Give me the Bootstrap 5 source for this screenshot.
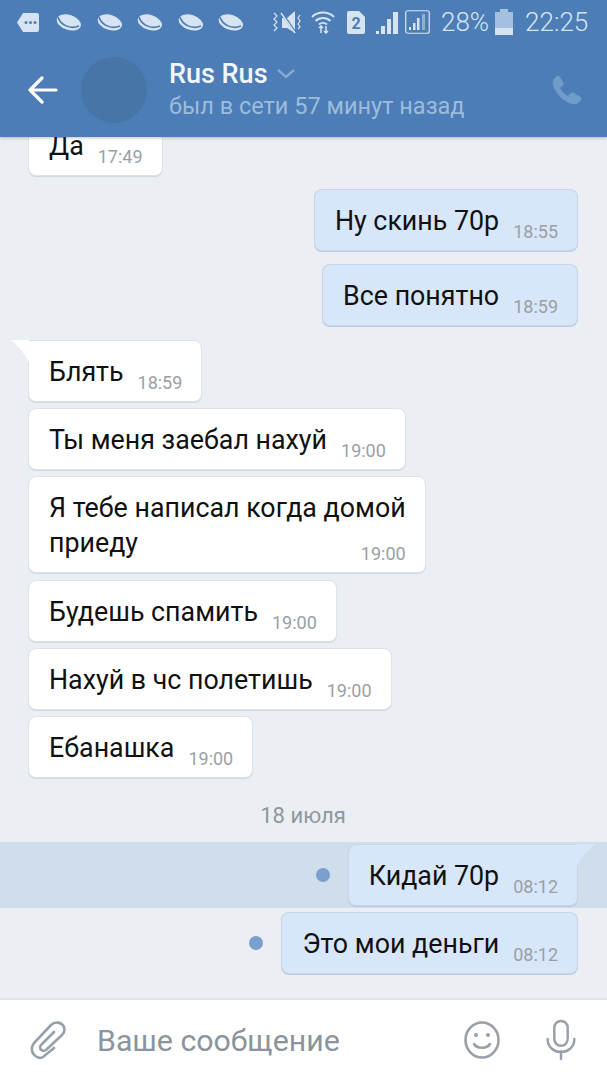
<!DOCTYPE html>
<html lang="ru">
<head>
<meta charset="utf-8">
<title>Rus Rus</title>
<link rel="stylesheet" href="https://cdn.jsdelivr.net/npm/bootstrap@5.3.0/dist/css/bootstrap.min.css">
<style>
html,body{height:1080px;overflow:hidden}
body{font-family:Roboto,"Liberation Sans",sans-serif;background:#ebeff3;color:#111}
.screen{width:607px;height:1080px}
.top{background:#4c7db6;height:137px;z-index:2;box-shadow:0 1px 3px rgba(60,80,100,.35)}
.stat{height:44px;padding:0 17px 0 17px;color:#d6e3f1;font-size:26px;font-weight:300;line-height:1}
.stat svg{display:block;flex:none}
.planets{gap:14.5px;margin-left:17px}
.mute{margin-left:27px}
.wifi{margin-left:8px}
.sim{margin-left:12px}
.sig{margin-left:11px}
.sigbox{margin-left:6px}
.pct{margin-left:11px}
.batt{margin-left:6px}
.clock{margin-left:12px}
.head{height:93px;padding:0 25px 2px 28px}
.ava{width:66px;height:66px;border-radius:50%;background:#4775a8;margin-left:23px;margin-right:22px;flex:none}
.nm{color:#f2f6fa;font-size:27px;font-weight:500;line-height:32px}
.sub{color:#9dbcdc;font-size:23.500px;line-height:32px}
.feed{min-height:0;padding:0 30px 25px 29px}
.bub{position:relative;padding:14px 19px 11px 20px;font-size:26.800px;line-height:35px;border-radius:7px;background:#fff;box-shadow:0 0 0 1px #dde3e9,0 1px 0 1px #d0d8e0;margin-bottom:8px;white-space:nowrap}
.bub.me{background:#d7e6f8;box-shadow:0 0 0 1px #c6d6e6,0 1px 0 1px #b9cbdd}
.tm{color:#9a9fa6;font-size:18px;line-height:22px;margin-left:14px;margin-bottom:-4px;flex:none}
.gap-after{margin-bottom:15px}
.gap-wide{margin-bottom:16px}
.gap-nine{margin-bottom:9px}
.tail{position:absolute;top:-1px;display:block}
.tail-l{left:-18px}
.tail-r{right:-18px}
.bub.sq-l{border-top-left-radius:0}
.bub.sq-r{border-top-right-radius:0}
.day{color:#8f979f;font-size:22px;line-height:26px;margin:18px 0 13px}
.sel{background:#d0deeb;margin:0 -30px 5px -29px;padding:3px 30px 3px 29px}
.sel .bub{margin-bottom:0}
.dot{width:14px;height:14px;border-radius:50%;background:#7ba0cd;margin-right:19px;flex:none}
.foot{height:82px;background:#fff;border-top:2px solid #e1e5e9;padding:0 31px 0 29px;flex:none}
.ph{color:#8b949c;font-size:30.300px;margin-left:31px;padding-top:1px}
.mr-emo{margin-right:45px}
</style>
</head>
<body>
<div class="screen d-flex flex-column">
  <header class="top flex-none position-relative">
    <div class="stat d-flex align-items-center">
      <svg width="22" height="19" viewBox="0 0 22 19"><path d="M6 0H20a2 2 0 0 1 2 2V17a2 2 0 0 1-2 2H6L0 9.500Z" fill="#d6e3f1"/><circle cx="9" cy="9.500" r="1.500" fill="#4c7db6"/><circle cx="13.500" cy="9.500" r="1.500" fill="#4c7db6"/><circle cx="18" cy="9.500" r="1.500" fill="#4c7db6"/></svg>
      <div class="planets d-flex">
        <svg width="26" height="19" viewBox="0 0 26 19"><use href="#planet"/></svg>
        <svg width="26" height="19" viewBox="0 0 26 19"><use href="#planet"/></svg>
        <svg width="26" height="19" viewBox="0 0 26 19"><use href="#planet"/></svg>
        <svg width="26" height="19" viewBox="0 0 26 19"><use href="#planet"/></svg>
        <svg width="26" height="19" viewBox="0 0 26 19"><use href="#planet"/></svg>
      </div>
      <svg class="mute" width="32" height="24" viewBox="0 0 32 24"><path d="M11 8h5l8-7v22l-8-5h-5Z" fill="#d6e3f1"/><path d="M10 2L24 22" stroke="#4c7db6" stroke-width="2.500"/><path d="M10 3L24 23" stroke="#d6e3f1" stroke-width="1.500"/><path d="M3 3l3 3-3 3 3 3-3 3 3 3-3 3M29 5l-2 3 2 3-2 3 2 3-2 2" fill="none" stroke="#d6e3f1" stroke-width="1.200"/></svg>
      <svg class="wifi" width="24" height="24" viewBox="0 0 24 24" fill="none" stroke="#d6e3f1" stroke-width="2"><path d="M1 7a16 16 0 0 1 22 0M4.500 11a11 11 0 0 1 15 0M8 14.500a6 6 0 0 1 8 0"/><path d="M10 16v7M8 18l2-2 2 2M15 23v-7M13 21l2 2 2-2" stroke-width="1.500"/></svg>
      <svg class="sim" width="18" height="23" viewBox="0 0 18 23"><path d="M2 0H12L18 6V21a2 2 0 0 1-2 2H2a2 2 0 0 1-2-2V2A2 2 0 0 1 2 0Z" fill="#d6e3f1"/><text x="9" y="18" text-anchor="middle" font-family="Roboto" font-weight="700" font-size="16" fill="#4c7db6">2</text></svg>
      <svg class="sig" width="23" height="23" viewBox="0 0 23 23" fill="#d6e3f1"><rect x="0" y="20" width="3" height="3"/><rect x="5" y="15" width="4" height="8"/><rect x="11" y="8" width="4" height="15"/><rect x="17" y="1" width="5" height="22"/></svg>
      <svg class="sigbox" width="25" height="24" viewBox="0 0 25 24"><rect x=".75" y=".75" width="23.500" height="22.500" rx="2" fill="none" stroke="#d6e3f1" stroke-width="1.200"/><g fill="#d6e3f1"><rect x="4" y="17" width="2" height="3"/><rect x="8" y="13" width="2.500" height="7"/><rect x="12" y="8" width="2.500" height="12"/></g><rect x="17" y="4" width="3" height="16" fill="#8fb0d3"/></svg>
      <span class="pct">28%</span>
      <svg class="batt" width="18" height="26" viewBox="0 0 18 26"><path d="M5 0h8v3h5v23H0V3h5Z" fill="#a3c0de"/><rect y="19" width="18" height="7" fill="#d6e3f1"/></svg>
      <span class="clock">22:25</span>
    </div>
    <div class="head d-flex align-items-center">
      <svg width="30" height="28" viewBox="0 0 30 28" class="flex-none" fill="none" stroke="#fff" stroke-width="3.200" stroke-linecap="round" stroke-linejoin="round"><path d="M2 14H28M14 2L2 14L14 26"/></svg>
      <div class="ava"></div>
      <div class="flex-grow-1">
        <div class="nm d-flex align-items-center">Rus Rus<svg class="ms-2" width="20" height="10" viewBox="0 0 20 10" fill="none" stroke="#86a9cf" stroke-width="2.400"><path d="M2 1l8 7 8-7"/></svg></div>
        <div class="sub">был в сети 57 минут назад</div>
      </div>
      <svg width="30" height="30" viewBox="0 0 30 30"><path d="M5 1C2 3 0 6 1 10C3 18 12 27 20 29C24 30 27 28 29 25C30 23 29 22 27 21L22 18C20 17 19 18 18 19L16 21C12 19 10 16 8 13L10 11C12 10 12 9 11 7L8 2C7 1 6 0 5 1Z" fill="#6f9cc9"/></svg>
    </div>
  </header>

  <main class="feed flex-grow-1 d-flex flex-column justify-content-end align-items-start overflow-hidden">
    <div class="bub d-flex align-items-end gap-after flex-none"><span>Да</span><span class="tm">17:49</span></div>
    <div class="bub me d-flex align-items-end align-self-end gap-after flex-none"><span>Ну скинь 70р</span><span class="tm">18:55</span></div>
    <div class="bub me d-flex align-items-end align-self-end gap-wide flex-none"><span>Все понятно</span><span class="tm">18:59</span></div>
    <div class="bub sq-l d-flex align-items-end flex-none">
      <svg class="tail tail-l" width="18" height="22" viewBox="0 0 18 22"><path d="M18 0H0Q12 10 18 22Z" fill="#fff"/></svg>
      <span>Блять</span><span class="tm">18:59</span></div>
    <div class="bub d-flex align-items-end flex-none"><span>Ты меня заебал нахуй</span><span class="tm">19:00</span></div>
    <div class="bub gap-nine flex-none">
      <div>Я тебе написал когда домой</div>
      <div class="d-flex justify-content-between align-items-end"><span>приеду</span><span class="tm">19:00</span></div>
    </div>
    <div class="bub d-flex align-items-end flex-none"><span>Будешь спамить</span><span class="tm">19:00</span></div>
    <div class="bub d-flex align-items-end flex-none"><span>Нахуй в чс полетишь</span><span class="tm">19:00</span></div>
    <div class="bub d-flex align-items-end flex-none"><span>Ебанашка</span><span class="tm">19:00</span></div>
    <div class="day align-self-center">18 июля</div>
    <div class="sel align-self-stretch d-flex justify-content-end align-items-center flex-none">
      <span class="dot"></span>
      <div class="bub me sq-r d-flex align-items-end">
        <svg class="tail tail-r" width="18" height="22" viewBox="0 0 18 22"><path d="M0 0H18Q6 10 0 22Z" fill="#d7e6f8"/></svg>
        <span>Кидай 70р</span><span class="tm">08:12</span></div>
    </div>
    <div class="align-self-end d-flex align-items-center flex-none">
      <span class="dot"></span>
      <div class="bub me d-flex align-items-end mb-0"><span>Это мои деньги</span><span class="tm">08:12</span></div>
    </div>
  </main>

  <footer class="foot d-flex align-items-center">
    <svg width="37" height="38" viewBox="0 0 37 38" fill="none" stroke="#98a1a9" stroke-width="2.600" stroke-linecap="round"><path d="M25 27L14 36C9 39 2 33 3 27C3 25 4 24 5 22L22 4C26 0 33 1 35 6C36 9 35 12 33 14L17 29C14 31 11 29 11 26C11 25 12 24 13 23L25 11"/></svg>
    <span class="ph flex-grow-1">Ваше сообщение</span>
    <svg class="mr-emo" width="38" height="38" viewBox="0 0 38 38" fill="none" stroke="#98a1a9" stroke-width="2.600" stroke-linecap="round"><ellipse cx="19" cy="19" rx="16.500" ry="17.500"/><path d="M11 23c3 5 13 5 16 0"/><circle cx="13" cy="14" r="2" fill="#98a1a9" stroke="none"/><circle cx="25" cy="14" r="2" fill="#98a1a9" stroke="none"/></svg>
    <svg width="30" height="42" viewBox="0 0 30 44" fill="none" stroke="#98a1a9" stroke-width="2.600" stroke-linecap="round"><rect x="8" y="2" width="14" height="26" rx="7"/><path d="M1 21c0 18 28 18 28 0M15 34V42"/></svg>
  </footer>
</div>
<svg width="0" height="0" class="d-block position-absolute">
  <defs>
    <g id="planet"><g transform="rotate(18 13 9)"><ellipse cx="13" cy="9.500" rx="12.500" ry="7.500" fill="#d6e3f1"/></g><path d="M2 4C4 11 13 17 23 13" fill="none" stroke="#4c7db6" stroke-width="1.600"/></g>
  </defs>
</svg>
</body>
</html>
